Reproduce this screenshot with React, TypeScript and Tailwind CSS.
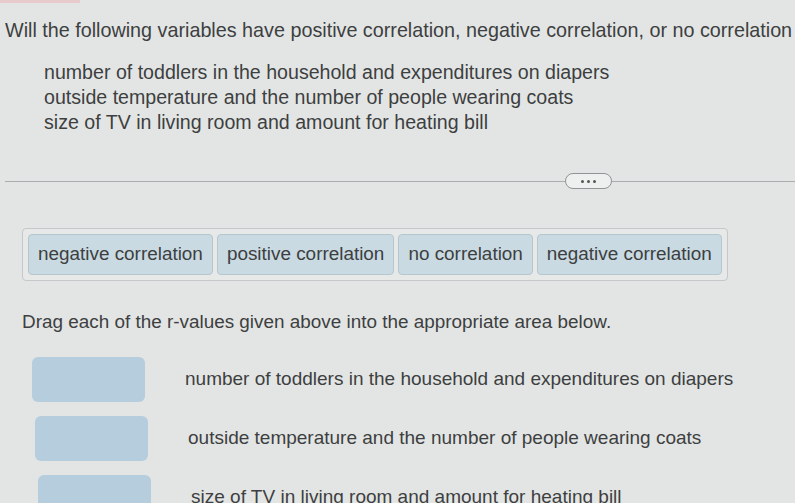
import React from 'react'

const items = [
  'number of toddlers in the household and expenditures on diapers',
  'outside temperature and the number of people wearing coats',
  'size of TV in living room and amount for heating bill',
]

const chips = [
  'negative correlation',
  'positive correlation',
  'no correlation',
  'negative correlation',
]

export default function App() {
  return (
    <div
      className="relative w-[795px] h-[503px] overflow-hidden bg-[#e3e5e5] text-[#3d3f40]"
      style={{ fontFamily: '"Liberation Sans", Arial, sans-serif' }}
    >
      {/* top pink strip */}
      <div className="h-[3px] w-[80px] bg-[#e8c9cc]" />

      {/* question */}
      <p className="ml-[5px] mt-[15px] whitespace-nowrap text-[19.75px] leading-[24px]">
        Will the following variables have positive correlation, negative correlation, or no correlation
      </p>

      <ul className="ml-[44px] mt-[18px] flex flex-col text-[19.6px] leading-[25px]">
        {items.map(item => (
          <li key={item} className="whitespace-nowrap">
            {item}
          </li>
        ))}
      </ul>

      {/* divider with dots */}
      <div className="mt-[38px] ml-[5px] flex items-center">
        <div className="h-px w-[560px] bg-[#a9adaf]" />
        <div className="flex h-[16px] w-[47px] items-center justify-center gap-[3px] rounded-full border border-[#8f9496] bg-[#eeefef]">
          <span className="h-[3px] w-[3px] rounded-full bg-[#555]" />
          <span className="h-[3px] w-[3px] rounded-full bg-[#555]" />
          <span className="h-[3px] w-[3px] rounded-full bg-[#555]" />
        </div>
        <div className="h-px flex-1 bg-[#a9adaf]" />
      </div>

      {/* chip tray */}
      <div className="ml-[22px] mt-[39px] inline-flex gap-[4px] rounded-[4px] border border-[#c4c8ca] bg-[#e7e9e9] p-[5px]">
        {chips.map((chip, i) => (
          <div
            key={i}
            className="flex h-[41px] items-center rounded-[4px] border border-[#b6c6cf] bg-[#c9dae3] px-[9px] text-[18.9px]"
          >
            {chip}
          </div>
        ))}
      </div>

      <p className="ml-[22px] mt-[30px] whitespace-nowrap text-[18.9px] leading-[22px]">
        Drag each of the r-values given above into the appropriate area below.
      </p>

      {/* drop targets */}
      <div className="mt-[24px] flex flex-col gap-[14px]">
        {items.map((item, i) => (
          <div key={item} className="flex items-center">
            <div
              className={`h-[45px] w-[113px] shrink-0 rounded-[6px] bg-[#b5cddc] ${
                i === 0 ? 'ml-[32px]' : i === 1 ? 'ml-[35px]' : 'ml-[38px]'
              }`}
            />
            <span className="ml-[40px] whitespace-nowrap text-[19px]">{item}</span>
          </div>
        ))}
      </div>
    </div>
  )
}
